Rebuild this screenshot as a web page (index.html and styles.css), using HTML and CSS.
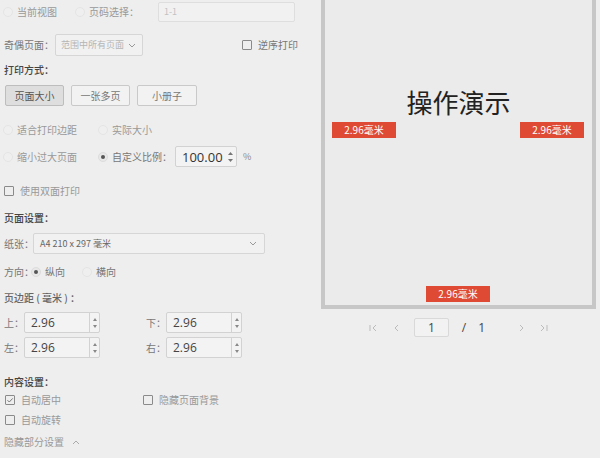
FILE: index.html
```html
<!DOCTYPE html>
<html lang="zh">
<head>
<meta charset="utf-8">
<title>打印设置</title>
<link rel="stylesheet" href="styles.css">
</head>
<body>
<div class="app">
  <div class="settings">
    <div class="row r1">
      <span class="opt w72"><i class="radio"></i><span class="dim">当前视图</span></span>
      <span class="opt"><i class="radio"></i><span class="dim">页码选择：</span></span>
      <span class="field range">1-1</span>
    </div>

    <div class="row r2">
      <span class="lbl">奇偶页面：</span>
      <span class="select odd">
        <span class="select-text dim">范围中所有页面</span>
        <svg class="chev" width="8" height="5" viewBox="0 0 8 5"><path d="M1 1l3 3 3-3" fill="none" stroke="#999" stroke-width="1"/></svg>
      </span>
      <span class="opt push"><i class="check"></i><span class="lbl">逆序打印</span></span>
    </div>

    <div class="row r3 head">打印方式：</div>

    <div class="row r4">
      <span class="btn active">页面大小</span>
      <span class="btn">一张多页</span>
      <span class="btn wide">小册子</span>
    </div>

    <div class="row r5">
      <span class="opt w95"><i class="radio"></i><span class="dim">适合打印边距</span></span>
      <span class="opt"><i class="radio"></i><span class="dim">实际大小</span></span>
    </div>

    <div class="row r6">
      <span class="opt w95"><i class="radio"></i><span class="dim">缩小过大页面</span></span>
      <span class="opt"><i class="radio on"></i><span class="lbl">自定义比例：</span></span>
      <span class="num scale">
        <span class="num-text big">100.00</span>
        <span class="spin plain">
          <svg width="5" height="3" viewBox="0 0 5 3"><path d="M0 3L2.5 0 5 3z" fill="#777"/></svg>
          <svg width="5" height="3" viewBox="0 0 5 3"><path d="M0 0h5L2.5 3z" fill="#777"/></svg>
        </span>
      </span>
      <span class="pct">%</span>
    </div>

    <div class="row r7">
      <span class="opt"><i class="check"></i><span class="dim">使用双面打印</span></span>
    </div>

    <div class="row r8 head">页面设置：</div>

    <div class="row r9">
      <span class="lbl">纸张：</span>
      <span class="select paper">
        <span class="select-text paper-text">A4 210 x 297 毫米</span>
        <svg class="chev" width="8" height="5" viewBox="0 0 8 5"><path d="M1 1l3 3 3-3" fill="none" stroke="#999" stroke-width="1"/></svg>
      </span>
    </div>

    <div class="row r10">
      <span class="lbl">方向：</span>
      <span class="opt tight"><i class="radio on"></i><span class="lbl">纵向</span></span>
      <span class="opt gap18"><i class="radio"></i><span class="lbl">横向</span></span>
    </div>

    <div class="row r11 head light">页边距 ( 毫米 ) ：</div>

    <div class="row r12">
      <span class="margin-group">
        <span class="lbl">上：</span>
        <span class="num mnum">
          <span class="num-text">2.96</span>
          <span class="spin">
            <svg width="4" height="3" viewBox="0 0 4 3"><path d="M0 3L2 0 4 3z" fill="#888"/></svg>
            <svg width="4" height="3" viewBox="0 0 4 3"><path d="M0 0h4L2 3z" fill="#888"/></svg>
          </span>
        </span>
      </span>
      <span class="margin-group second">
        <span class="lbl">下：</span>
        <span class="num mnum">
          <span class="num-text">2.96</span>
          <span class="spin">
            <svg width="4" height="3" viewBox="0 0 4 3"><path d="M0 3L2 0 4 3z" fill="#888"/></svg>
            <svg width="4" height="3" viewBox="0 0 4 3"><path d="M0 0h4L2 3z" fill="#888"/></svg>
          </span>
        </span>
      </span>
    </div>

    <div class="row r13">
      <span class="margin-group">
        <span class="lbl">左：</span>
        <span class="num mnum">
          <span class="num-text">2.96</span>
          <span class="spin">
            <svg width="4" height="3" viewBox="0 0 4 3"><path d="M0 3L2 0 4 3z" fill="#888"/></svg>
            <svg width="4" height="3" viewBox="0 0 4 3"><path d="M0 0h4L2 3z" fill="#888"/></svg>
          </span>
        </span>
      </span>
      <span class="margin-group second">
        <span class="lbl">右：</span>
        <span class="num mnum">
          <span class="num-text">2.96</span>
          <span class="spin">
            <svg width="4" height="3" viewBox="0 0 4 3"><path d="M0 3L2 0 4 3z" fill="#888"/></svg>
            <svg width="4" height="3" viewBox="0 0 4 3"><path d="M0 0h4L2 3z" fill="#888"/></svg>
          </span>
        </span>
      </span>
    </div>

    <div class="row r14 head">内容设置：</div>

    <div class="row r15">
      <span class="opt w139 shift"><i class="check checked"><svg width="8" height="8" viewBox="0 0 8 8"><path d="M1.5 4.2l1.8 1.8 3.4-3.6" fill="none" stroke="#777" stroke-width="1"/></svg></i><span class="dim">自动居中</span></span>
      <span class="opt"><i class="check"></i><span class="dim">隐藏页面背景</span></span>
    </div>

    <div class="row r16">
      <span class="opt shift"><i class="check"></i><span class="dim">自动旋转</span></span>
    </div>

    <div class="row r17">
      <span class="dim">隐藏部分设置</span>
      <svg class="caret" width="8" height="5" viewBox="0 0 8 5"><path d="M1 4l3-3 3 3" fill="none" stroke="#aaa" stroke-width="1"/></svg>
    </div>
  </div>

  <div class="preview">
    <div class="frame">
      <div class="title">操作演示</div>
      <span class="tag tag-left">2.96毫米</span>
      <span class="tag tag-right">2.96毫米</span>
      <span class="tag tag-bottom">2.96毫米</span>
    </div>
    <div class="pager">
      <svg class="pg first" width="10" height="10" viewBox="0 0 10 10"><path d="M2 2v6M8 2L5 5l3 3" fill="none" stroke="#bbb" stroke-width="1"/></svg>
      <svg class="pg prev" width="6" height="10" viewBox="0 0 6 10"><path d="M5 2L2 5l3 3" fill="none" stroke="#bbb" stroke-width="1"/></svg>
      <span class="page-box">1</span>
      <span class="slash">/</span>
      <span class="total">1</span>
      <svg class="pg next" width="6" height="10" viewBox="0 0 6 10"><path d="M1 2l3 3-3 3" fill="none" stroke="#bbb" stroke-width="1"/></svg>
      <svg class="pg last" width="10" height="10" viewBox="0 0 10 10"><path d="M2 2l3 3-3 3M8 2v6" fill="none" stroke="#bbb" stroke-width="1"/></svg>
    </div>
  </div>
</div>
</body>
</html>
```

FILE: styles.css
```css
html, body {
  margin: 0;
  padding: 0;
  background: #eeeeee;
}

body {
  font-family: "Noto Sans CJK SC", "Noto Sans", sans-serif;
  font-size: 10px;
  color: #888;
}

.app {
  display: flex;
  width: 600px;
  height: 458px;
  overflow: hidden;
}

.settings {
  width: 321px;
  flex: none;
  box-sizing: border-box;
  padding-left: 4px;
  padding-right: 23px;
  display: flex;
  flex-direction: column;
}

.row {
  display: flex;
  align-items: center;
  flex: none;
  white-space: nowrap;
  line-height: 16px;
}

.r1 { height: 24px; }
.r2 { height: 22px; margin-top: 10px; }
.r3 { height: 16px; margin-top: 6px; }
.r4 { height: 21px; margin-top: 7px; }
.r5 { height: 20px; margin-top: 14px; }
.r6 { height: 21px; margin-top: 6px; }
.r7 { height: 16px; margin-top: 16px; }
.r8 { height: 16px; margin-top: 11px; }
.r9 { height: 21px; margin-top: 7px; }
.r10 { height: 16px; margin-top: 10px; }
.r11 { height: 16px; margin-top: 10px; }
.r12 { height: 21px; margin-top: 6px; }
.r13 { height: 21px; margin-top: 4px; }
.r14 { height: 16px; margin-top: 16px; }
.r15 { height: 16px; margin-top: 2px; }
.r16 { height: 16px; margin-top: 4px; }
.r17 { height: 16px; margin-top: 6px; }

.head {
  color: #444;
  font-weight: 500;
}

.head.light {
  color: #666;
}

.lbl { color: #777; }
.dim { color: #999; }

.opt {
  display: flex;
  align-items: center;
}

.w72 { width: 72px; }
.w95 { width: 95px; }
.w139 { width: 138px; }
.push { margin-left: auto; }
.tight .radio { margin-left: -3px; }
.gap18 { margin-left: 18px; }
.shift { margin-left: 1px; }

.radio {
  display: block;
  width: 10px;
  height: 10px;
  margin-left: -1px;
  margin-right: 4px;
  box-sizing: border-box;
  border-radius: 50%;
  border: 1px solid #e5e5e5;
  background: #efefef;
  position: relative;
}

.radio.on {
  border-color: #dcdcdc;
  background: #e8e8e8;
}

.radio.on::after {
  content: "";
  position: absolute;
  left: 2px;
  top: 2px;
  width: 4px;
  height: 4px;
  border-radius: 50%;
  background: #555;
}

.check {
  display: flex;
  align-items: center;
  justify-content: center;
  width: 10px;
  height: 10px;
  box-sizing: border-box;
  border: 1px solid #8a8a8a;
  border-radius: 1px;
  margin-right: 6px;
}

.field {
  display: flex;
  align-items: center;
  box-sizing: border-box;
  height: 20px;
  border: 1px solid #dedede;
  background: #f1f1f1;
  border-radius: 2px;
}

.range {
  width: 137px;
  margin-left: 19px;
  padding-left: 5px;
  color: #c2c2c2;
  font-size: 9px;
}

.select {
  display: flex;
  align-items: center;
  justify-content: space-between;
  box-sizing: border-box;
  height: 22px;
  border: 1px solid #d6d6d6;
  border-radius: 2px;
  background: #f1f1f1;
  padding: 0 6px 0 5px;
}

.odd {
  width: 88px;
  margin-left: 1px;
}

.odd .select-text {
  color: #b5b5b5;
  font-size: 9px;
}

.paper {
  width: 232px;
  height: 21px;
  margin-left: -1px;
  padding-left: 6px;
  padding-right: 7px;
}

.paper-text {
  font-size: 9px;
  color: #666;
}

.btn {
  display: flex;
  align-items: center;
  justify-content: center;
  box-sizing: border-box;
  width: 59px;
  height: 21px;
  margin-left: 7px;
  border: 1px solid #c9c9c9;
  border-radius: 2px;
  background: #f2f2f2;
  color: #777;
}

.btn.active {
  margin-left: 1px;
  background: #dedede;
  border-color: #bdbdbd;
  color: #555;
}

.btn.wide { width: 60px; }

.num {
  display: flex;
  align-items: stretch;
  box-sizing: border-box;
  height: 21px;
  border: 1px solid #d2d2d2;
  border-radius: 2px;
  background: #f3f3f3;
}

.num-text {
  flex: 1;
  display: flex;
  align-items: center;
  padding-left: 6px;
  font-family: "Open Sans", "Noto Sans", sans-serif;
  font-size: 12px;
  color: #444;
}

.num-text.big {
  font-size: 13px;
  color: #333;
}

.spin {
  width: 9px;
  display: flex;
  flex-direction: column;
  align-items: center;
  justify-content: center;
  gap: 4px;
  border-left: 1px solid #d2d2d2;
}

.spin.plain {
  border-left: none;
  width: 12px;
}

.scale {
  width: 62px;
  margin-left: 3px;
}

.pct {
  margin-left: 6px;
  color: #888;
  font-size: 9px;
}

.margin-group {
  display: flex;
  align-items: center;
  height: 21px;
}

.margin-group.second {
  margin-left: 46px;
}

.mnum {
  width: 76px;
}

.caret {
  margin-left: 8px;
}

/* preview */
.preview {
  width: 275px;
  flex: none;
  display: flex;
  flex-direction: column;
}

.frame {
  position: relative;
  height: 309px;
  box-sizing: border-box;
  border: 4px solid #c7c7c7;
  border-top: none;
  background: #ebebeb;
}

.title {
  position: absolute;
  left: 0;
  right: 0;
  top: 86px;
  text-align: center;
  font-size: 26px;
  line-height: 32px;
  color: #222;
}

.tag {
  position: absolute;
  width: 64px;
  height: 16px;
  line-height: 16px;
  text-align: center;
  background: #de4a34;
  color: #fff;
  font-size: 10px;
  font-family: "Noto Sans CJK SC", "Noto Sans", sans-serif;
}

.tag-left { left: 7px; top: 122px; }
.tag-right { right: 8px; top: 122px; }
.tag-bottom { left: 101px; bottom: 3px; }

.pager {
  display: flex;
  align-items: center;
  justify-content: center;
  height: 19px;
  margin-top: 9px;
  font-family: "Open Sans", "Noto Sans", sans-serif;
  font-size: 12px;
  color: #444;
}

.pg { display: block; }
.prev { margin-left: 15px; }
.page-box {
  display: flex;
  align-items: center;
  justify-content: center;
  box-sizing: border-box;
  width: 35px;
  height: 19px;
  margin-left: 15px;
  border: 1px solid #d9d9d9;
  border-radius: 2px;
  background: #f2f2f2;
}
.slash { margin-left: 13px; }
.total { margin-left: 12px; }
.next { margin-left: 34px; }
.last { margin-left: 14px; }
```
